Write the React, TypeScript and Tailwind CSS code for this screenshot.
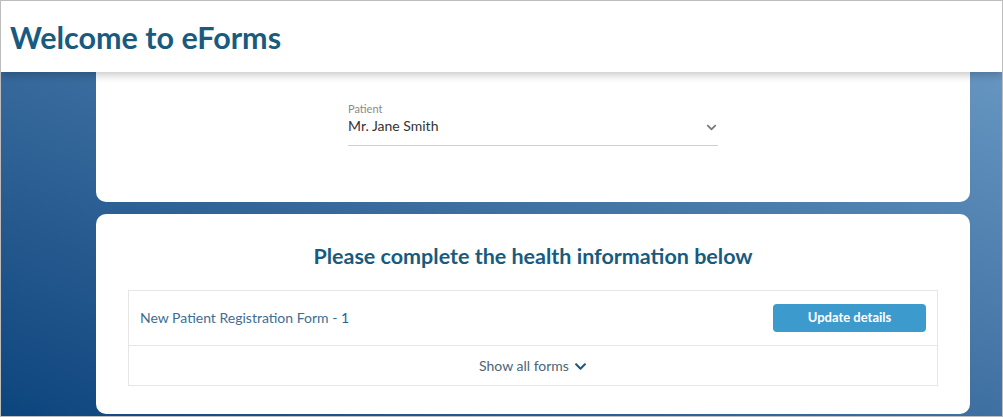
import { FaChevronDown } from 'react-icons/fa';

export default function App() {
  return (
    <div className="h-[417px] w-[1003px] overflow-hidden border border-[#bdbdbd] flex flex-col bg-linear-to-tr from-[#0b457d] to-[#6e9dc7] font-['Lato',sans-serif]">
      <header className="relative z-10 h-[71px] shrink-0 bg-white shadow-[0_3px_8px_rgba(0,0,0,0.22)] flex items-center px-[9px]">
        <h1 className="text-[30.5px] font-bold text-[#185b7e] leading-none pt-[2px]">Welcome to eForms</h1>
      </header>

      <section className="ml-[95px] w-[874px] h-[130px] shrink-0 bg-white rounded-b-[10px] flex justify-center">
        <div className="w-[370px] mt-[31px]">
          <label className="block text-[11px] text-[#8a8a8a] leading-none">Patient</label>
          <div className="flex items-center justify-between border-b border-[#cfcfcf] pt-[5px] pb-[12px]">
            <span className="text-[14px] text-[#333] leading-none">Mr. Jane Smith</span>
            <FaChevronDown className="h-[11px] w-[11px] text-[#7a7a7a] mr-[1px] mt-[3px]" />
          </div>
        </div>
      </section>

      <section className="ml-[95px] w-[874px] mt-[12px] mb-[2px] flex-1 bg-white rounded-[10px] px-[32px] pt-[32px]">
        <h2 className="text-center text-[21.5px] font-bold text-[#185b7e] leading-none">
          Please complete the health information below
        </h2>
        <div className="mt-[22px] border border-[#e6e6e6]">
          <div className="h-[55px] flex items-center justify-between pl-[11px] pr-[11px] border-b border-[#e6e6e6]">
            <span className="text-[14px] text-[#3e6d92]">
              New Patient Registration Form - <span className="text-[#1e6496]">1</span>
            </span>
            <button className="h-[28px] w-[153px] rounded-[4px] bg-[#3d9acc] text-white text-[13px] font-bold">
              Update details
            </button>
          </div>
          <div className="h-[39px] flex items-center justify-center gap-[5px]">
            <span className="text-[14px] text-[#4c6477]">Show all forms</span>
            <FaChevronDown className="h-[13px] w-[13px] text-[#185b7e] mt-[2px]" />
          </div>
        </div>
      </section>
    </div>
  );
}
